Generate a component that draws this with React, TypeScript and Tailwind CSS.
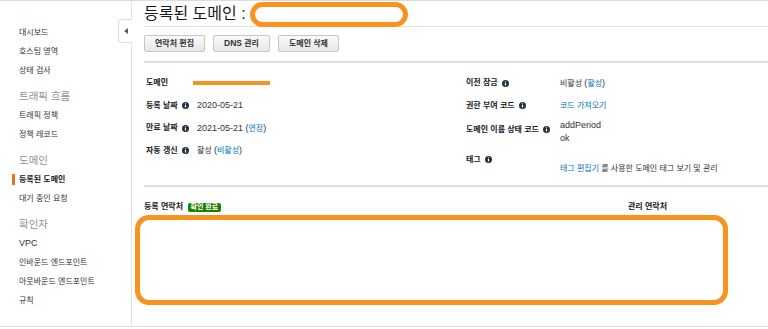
import React from 'react';

type NavEntry = { kind: 'item' | 'header'; label: string; active?: boolean };

const nav: NavEntry[] = [
  { kind: 'item', label: '대시보드' },
  { kind: 'item', label: '호스팅 영역' },
  { kind: 'item', label: '상태 검사' },
  { kind: 'header', label: '트래픽 흐름' },
  { kind: 'item', label: '트래픽 정책' },
  { kind: 'item', label: '정책 레코드' },
  { kind: 'header', label: '도메인' },
  { kind: 'item', label: '등록된 도메인', active: true },
  { kind: 'item', label: '대기 중인 요청' },
  { kind: 'header', label: '확인자' },
  { kind: 'item', label: 'VPC' },
  { kind: 'item', label: '인바운드 엔드포인트' },
  { kind: 'item', label: '아웃바운드 엔드포인트' },
  { kind: 'item', label: '규칙' },
];

function Info() {
  return (
    <svg width="7" height="7" viewBox="0 0 14 14" className="ml-[4px] shrink-0">
      <circle cx="7" cy="7" r="7" fill="#232f3e" />
      <circle cx="7" cy="3.7" r="1.4" fill="#fff" />
      <rect x="5.8" y="6" width="2.4" height="5.2" rx="0.6" fill="#fff" />
    </svg>
  );
}

const Link = ({ children }: { children: React.ReactNode }) => (
  <span className="text-[#0073bb]">{children}</span>
);

export default function App() {
  return (
    <div className="relative w-[768px] h-[329px] bg-white overflow-hidden font-['Liberation_Sans','Noto_Sans_CJK_KR',sans-serif] text-[8px] text-[#16191f]">
      <div className="h-[327px] flex border-t border-b border-[#dcdcdc]">
        {/* Sidebar */}
        <div className="relative w-[132px] shrink-0 border-r border-[#e1e1e1] pt-[22px]">
          {nav.map((n) =>
            n.kind === 'header' ? (
              <div key={n.label} className="mt-[7px] h-[19px] pl-[19px] flex items-center text-[10.5px] text-[#879596]">
                {n.label}
              </div>
            ) : n.active ? (
              <div key={n.label} className="h-[19px] pl-[12px] flex items-center font-bold text-[#16191f]">
                <span className="w-[3px] h-[11px] bg-[#ec7211] mr-[4px]" />
                {n.label}
              </div>
            ) : (
              <div key={n.label} className="h-[19px] pl-[19px] flex items-center text-[#333]">
                {n.label === 'VPC' ? <span className="text-[9px]">VPC</span> : n.label}
              </div>
            )
          )}
          <div className="absolute right-[-1px] top-[18px] w-[14px] h-[24px] bg-white border border-r-0 border-[#dcdcdc] rounded-l-[4px] flex items-center justify-center">
            <svg width="4" height="6" viewBox="0 0 4 6">
              <path d="M4 0 L0 3 L4 6 Z" fill="#545b64" />
            </svg>
          </div>
        </div>

        {/* Main */}
        <div className="flex-1 pl-[12px] flex flex-col">
          <div className="h-[26px] border-b border-[#e3e3e3] flex items-center text-[16px] text-[#16191f]">
            등록된 도메인 :
          </div>

          <div className="mt-[8px] flex gap-[8px] h-[17px]">
            {['연락처 편집', 'DNS 관리', '도메인 삭제'].map((b) => (
              <div
                key={b}
                className="h-[17px] px-[10px] flex items-center font-bold text-[#333] border border-[#c6c6c6] rounded-[2px] bg-gradient-to-b from-[#fbfbfb] to-[#e6e6e6]"
              >
                {b === 'DNS 관리' ? (
                  <>
                    <span className="text-[8.5px]">DNS</span>&nbsp;관리
                  </>
                ) : (
                  b
                )}
              </div>
            ))}
          </div>

          <div className="mt-[9px] border-t-2 border-[#e0e0e0] h-[124px] grid grid-cols-[322px_1fr] pt-[9px]">
            {/* left column */}
            <div className="flex flex-col pl-[2px]">
              <div className="h-[22.5px] flex items-center">
                <div className="w-[51px] font-bold">도메인</div>
                <div className="-ml-[4px] w-[77px] h-[4px] bg-[#f7931e]" />
              </div>
              <div className="h-[22.5px] flex items-center">
                <div className="w-[51px] flex items-center font-bold">
                  등록 날짜<Info />
                </div>
                <span className="text-[9px] text-[#333]">2020-05-21</span>
              </div>
              <div className="h-[22.5px] flex items-center">
                <div className="w-[51px] flex items-center font-bold">
                  만료 날짜<Info />
                </div>
                <span className="text-[9px] text-[#333]">
                  2021-05-21 (<Link><span className="text-[8px]">연장</span></Link>)
                </span>
              </div>
              <div className="h-[22.5px] flex items-center">
                <div className="w-[51px] flex items-center font-bold">
                  자동 갱신<Info />
                </div>
                <span className="text-[#333]">
                  활성 <span className="text-[9px]">(</span>
                  <Link>비활성</Link>
                  <span className="text-[9px]">)</span>
                </span>
              </div>
            </div>

            {/* right column */}
            <div className="flex flex-col">
              <div className="h-[22.5px] flex items-center">
                <div className="w-[94px] flex items-center font-bold">
                  이전 잠금<Info />
                </div>
                <span className="text-[#333]">
                  비활성 <span className="text-[9px]">(</span>
                  <Link>활성</Link>
                  <span className="text-[9px]">)</span>
                </span>
              </div>
              <div className="h-[22.5px] flex items-center">
                <div className="w-[94px] flex items-center font-bold">
                  권한 부여 코드<Info />
                </div>
                <Link>코드 가져오기</Link>
              </div>
              <div className="h-[28px] flex items-start">
                <div className="w-[94px] pt-[5.5px] leading-[13px] flex items-center font-bold">
                  도메인 이름 상태 코드<Info />
                </div>
                <div className="pt-[1.5px] text-[9px] leading-[13px] text-[#333]">
                  <div>addPeriod</div>
                  <div>ok</div>
                </div>
              </div>
              <div className="flex items-start">
                <div className="w-[94px] pt-[7.5px] leading-[13px] flex items-center font-bold">
                  태그<Info />
                </div>
                <div className="pt-[16.5px] leading-[13px] text-[#333]">
                  <Link>태그 편집기</Link> 를 사용한 도메인 태그 보기 및 관리
                </div>
              </div>
            </div>
          </div>

          <div className="border-t-2 border-[#e0e0e0] pt-[13px] grid grid-cols-[484px_1fr]">
            <div className="flex items-center h-[14px] font-bold">
              등록 연락처
              <span className="ml-[5px] h-[9px] px-[2.5px] flex items-center rounded-[2px] bg-[#1d8102] text-white text-[7px] font-bold">
                확인 완료
              </span>
            </div>
            <div className="flex items-center h-[14px] font-bold">관리 연락처</div>
          </div>
        </div>
      </div>

      {/* annotation overlays */}
      <div className="absolute left-[250px] top-[2px] w-[158px] h-[25px] border-[5px] border-[#f7931e] rounded-full" />
      <div className="absolute left-[135px] top-[215px] w-[593px] h-[90px] border-[5px] border-[#f7931e] rounded-[14px]" />
    </div>
  );
}
